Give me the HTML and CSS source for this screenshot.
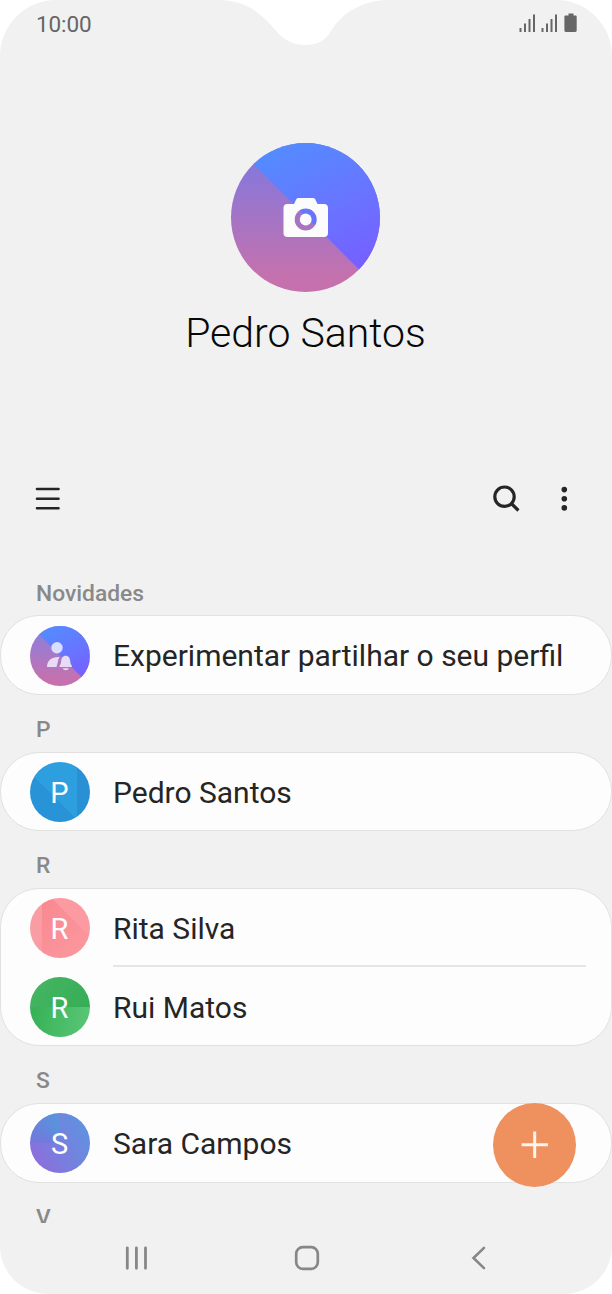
FILE: index.html
```html
<!DOCTYPE html>
<html lang="pt">
<head>
<meta charset="utf-8">
<title>Contactos</title>
<link rel="stylesheet" href="styles.css">
</head>
<body>
<div class="phone">
  <svg class="notch" width="180" height="46" viewBox="0 0 180 46"><path d="M0 0C29 1 42 13 58 32C66 41 75 45 86 45C98 45 106 41 112 31C124 12 143 1 168 0Z" fill="#fff"/></svg>
  <header class="status">
    <span class="time">10:00</span>
    <svg class="status-icons" width="60" height="22" viewBox="0 0 60 22">
      <g stroke="#666" stroke-width="2">
        <path d="M1.500 15v4M6 10.500V19M10.500 6V19M15 1.600V19M23.500 15v4M28 10.500V19M32.500 6V19M37 1.600V19"/>
      </g>
      <path d="M49.500.5h5v2h1.800c.9 0 1.400.5 1.400 1.400v13.700c0 .9-.5 1.400-1.400 1.400h-9.500c-.9 0-1.400-.5-1.400-1.400V3.900c0-.9.5-1.400 1.400-1.400h2.700z" fill="#666"/>
    </svg>
  </header>

  <section class="profile">
    <div class="photo">
      <svg width="46" height="42" viewBox="0 0 46 42">
        <path fill="#fcfcfc" fill-rule="evenodd" d="M15.500 1h14.500q1.500 0 2.200 1.300L34.500 7H41q4 0 4 4v25q0 4-4 4H4.500q-4 0-4-4V11q0-4 4-4H11l2.300-4.700Q14 1 15.500 1zM22.700 11.500a11 11 0 1 0 0 22a11 11 0 1 0 0-22z"/>
        <circle cx="22.700" cy="22.500" r="5.900" fill="#fcfcfc"/>
      </svg>
    </div>
    <h1 class="owner">Pedro Santos</h1>
  </section>

  <nav class="toolbar">
    <svg width="25" height="24" viewBox="0 0 25 24"><path d="M2 2h21.500M2 11.700h21.500M2 21.300h21.500" stroke="#252525" stroke-width="2.600" stroke-linecap="round"/></svg>
    <div class="actions">
      <svg width="28" height="28" viewBox="0 0 28 28" fill="none" stroke="#252525" stroke-width="3.200"><circle cx="11.500" cy="11.700" r="9.700"/><path d="M18.300 18.500l7.100 7"/></svg>
      <svg width="8" height="26" viewBox="0 0 8 26" fill="#252525"><circle cx="4.300" cy="3.600" r="2.800"/><circle cx="4.300" cy="12.800" r="2.800"/><circle cx="4.300" cy="21.900" r="2.800"/></svg>
    </div>
  </nav>

  <main class="list">
    <h2 class="label first">Novidades</h2>
    <div class="card tall">
      <div class="row">
        <div class="avatar share">
          <svg width="60" height="60" viewBox="0 0 60 60">
            <g fill="#e7dcf3"><circle cx="27" cy="21.700" r="5.700" fill="#d9ddff"/><path d="M17.500 41q-.6 0-.5-.8C17.500 34 22 30.500 29.500 31q-1.500 2-1.800 5.500L26.500 41zM29.800 41q-.9-.5-.2-1.200 1.400-1.500 1.500-4c.2-3.800 1.700-6 4.600-6s4.400 2.200 4.600 6q.1 2.500 1.500 4 .7.700-.2 1.200z"/><path d="M32.500 42.200h6.500q-.8 2-3.200 2t-3.300-2z"/></g>
          </svg>
        </div>
        <span class="name">Experimentar partilhar o seu perfil</span>
      </div>
    </div>
    <h2 class="label">P</h2>
    <div class="card"><div class="row"><div class="avatar blue">P</div><span class="name">Pedro Santos</span></div></div>
    <h2 class="label">R</h2>
    <div class="card double">
      <div class="row"><div class="avatar pink">R</div><span class="name divided">Rita Silva</span></div>
      <div class="row"><div class="avatar green">R</div><span class="name">Rui Matos</span></div>
    </div>
    <h2 class="label">S</h2>
    <div class="card tall"><div class="row"><div class="avatar violet">S</div><span class="name">Sara Campos</span></div></div>
    <h2 class="label">V</h2>
  </main>

  <footer class="navbar">
    <svg width="24" height="26" viewBox="0 0 24 26"><path d="M2.300 2.800v20.500M11.400 2.800v20.500M20.500 2.800v20.500" stroke="#878787" stroke-width="2.800" stroke-linecap="round"/></svg>
    <svg class="home" width="26" height="26" viewBox="0 0 26 26"><rect x="2.200" y="2.200" width="21.600" height="21.600" rx="6.500" fill="none" stroke="#878787" stroke-width="2.700"/></svg>
    <svg width="15" height="26" viewBox="0 0 15 26"><path d="M13 2.900L2.500 13 13 23.100" fill="none" stroke="#878787" stroke-width="2.600" stroke-linecap="round"/></svg>
  </footer>
  <button class="fab" aria-label="Adicionar"><svg width="28" height="28" viewBox="0 0 28 28"><path d="M13.700 .6v26.300M.6 13.700h26.300" stroke="#fff4ee" stroke-width="3"/></svg></button>
</div>
</body>
</html>
```
FILE: styles.css
```css
* { box-sizing: border-box; }
body { margin: 0; background: #fff; font-family: Roboto, "Liberation Sans", sans-serif; }
svg { display: block; flex: none; }
.phone { position: relative; display: flex; flex-direction: column; width: 612px; height: 1294px; overflow: hidden; background: #f1f1f1; border-radius: 56px 56px 48px 48px; }
.notch { position: absolute; top: 0; left: 219px; }
.status { display: flex; justify-content: space-between; height: 46px; padding: 13px 34px 0 36px; }
.status-icons { margin-right: -1px; }
.time { font-size: 22.500px; line-height: 22px; color: #666; letter-spacing: -.1px; }
.profile { display: flex; flex-direction: column; align-items: center; height: 414px; padding: 97px 1px 0 0; }
.photo { position: relative; display: flex; align-items: center; justify-content: center; width: 149px; height: 149px; overflow: hidden; border-radius: 50%; background: linear-gradient(#8580e2, #8b77d8 20%, #c571ad 90%); }
.photo::before, .share::before { content: ""; position: absolute; inset: 0; background: linear-gradient(155deg, #538cff 10%, #6875ff 50%, #765fff 85%); clip-path: polygon(0 -1%, 100% -1%, 100% 99%); }
.photo svg, .share svg { position: relative; }
.owner { margin: 16px 0 0; font-size: 41px; line-height: 50px; font-weight: 300; color: #080808; white-space: nowrap; }
.toolbar { display: flex; align-items: center; justify-content: space-between; height: 78px; padding: 0 44px 0 35px; }
.actions { display: flex; align-items: center; gap: 39px; }
.list { height: 685px; padding-top: 20px; overflow: hidden; }
.label { display: flex; align-items: flex-end; height: 57px; margin: 0; padding: 0 36px 9px; font-size: 22.800px; line-height: 26px; font-weight: 500; color: #898989; }
.first { padding-bottom: 8px; }
.card { height: 79px; padding: 0 25px 0 28.500px; border: 1px solid #e1e1e1; border-radius: 39px; background: #fdfdfd; }
.tall { height: 80px; }
.double { height: 158px; }
.row { display: flex; align-items: center; height: 78px; gap: 23.500px; }
.double .row + .row { height: 80px; }
.avatar { position: relative; display: flex; align-items: center; justify-content: center; flex: none; width: 60px; height: 60px; padding-top: 2px; overflow: hidden; border-radius: 50%; font-size: 29px; color: #fff; }
.name { display: flex; align-items: center; flex: 1; height: 100%; padding-top: 1px; font-size: 30px; color: #252525; white-space: nowrap; }
.divided { box-shadow: inset 0 -2px #e6e6e6; }
.share { padding-top: 0; margin-top: 1px; background: linear-gradient(#8580e2, #c571ad 90%); }
.blue { background: linear-gradient(90deg, transparent 78%, #2a90d6 78%), linear-gradient(45deg, #2993d8 41%, #2d9fdf 41%); }
.pink { background: linear-gradient(90deg, #fa9ca3 20%, transparent 20%), linear-gradient(225deg, #fb9aa1 32%, transparent 32.5%), linear-gradient(135deg, #f9868e, #fb969d 85%); }
.green { background: linear-gradient(125deg, #47b665 0, #35ad55 100%) 0 0 / 100% 50% no-repeat, linear-gradient(100deg, #38b257 15%, #5cc779 100%); }
.violet { background: conic-gradient(from 270deg at 50% 50%, #7478dc 0, #5795dc 24%, transparent 24%), linear-gradient(60deg, #906bdc 5%, #5f93e0 90%); }
.navbar { display: flex; align-items: center; justify-content: space-between; height: 71px; padding: 0 126px 2px 125px; }
.home { margin-right: 6px; }
.fab { position: absolute; left: 493px; top: 1103px; display: flex; align-items: center; justify-content: center; width: 83px; height: 84px; padding: 0; border: 0; border-radius: 50%; background: #ef905f; }
```
